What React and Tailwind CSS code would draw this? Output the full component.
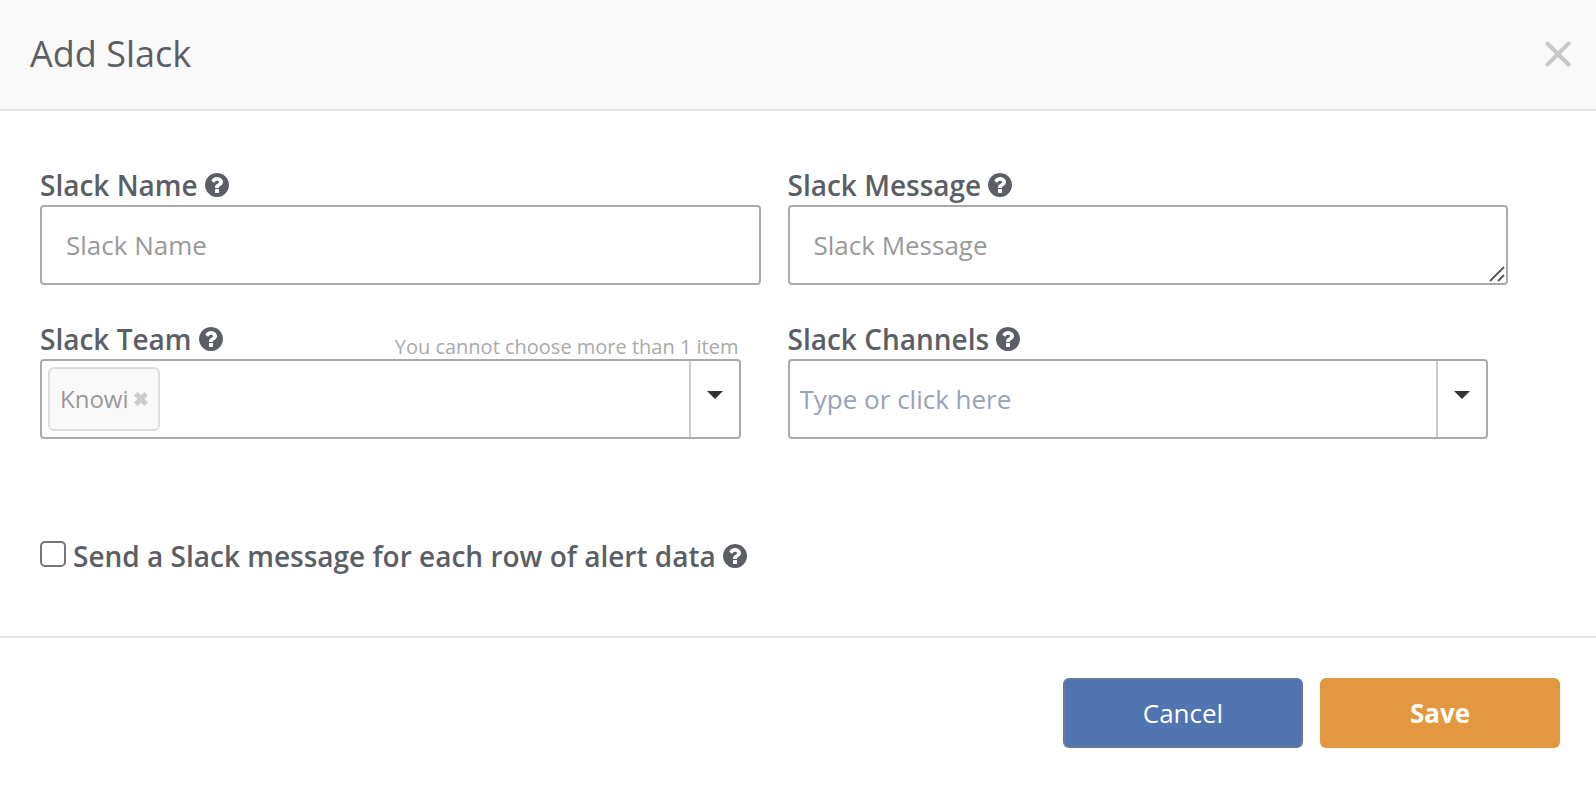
import React, { useState } from 'react';

const HelpIcon = () => (
    <svg viewBox="128 128 1536 1536" className="w-6 h-6 shrink-0" fill="currentColor" aria-hidden="true">
        <path d="M1024 1376v-192q0-14-9-23t-23-9h-192q-14 0-23 9t-9 23v192q0 14 9 23t23 9h192q14 0 23-9t9-23zm256-672q0-88-55.5-163t-138.5-116-170-41q-243 0-371 213-15 24 8 42l132 100q7 6 19 6 16 0 25-12 53-68 86-92 34-24 86-24 48 0 85.5 26t37.5 59q0 38-20 61t-68 45q-63 28-115.5 86.5t-52.5 125.5v36q0 14 9 23t23 9h192q14 0 23-9t9-23q0-19 21.5-49.5t54.5-49.5q32-18 49-28.5t46-35 44.5-48 28-60.5 12.5-81zm384 192q0 209-103 385.5t-279.5 279.5-385.5 103-385.5-103-279.5-279.5-103-385.5 103-385.5 279.5-279.5 385.5-103 385.5 103 279.5 279.5 103 385.5z" />
    </svg>
);

const FieldLabel = ({ htmlFor, children }) => (
    <label htmlFor={htmlFor} className="flex items-center gap-[7px] pb-0.5 text-[28px] leading-9 font-semibold">
        {children}
        <HelpIcon />
    </label>
);

const TagSelect = ({ id, name, tags, placeholder, onRemove }) => (
    <div className="flex h-20 mr-5 border-2 border-[#aaa] rounded bg-white">
        <div className="flex flex-1 min-w-0 items-center pl-1.5">
            {tags.map((tag) => (
                <span key={tag} className="flex h-16 items-center gap-[5px] px-2.5 border-2 border-[#dcdcdc] rounded-md bg-[#f9f9f9] text-2xl text-[#999]">
                    {tag}
                    <button type="button" aria-label={`Remove ${tag}`} onClick={() => onRemove(tag)} className="text-[#ccc]">
                        <svg viewBox="0 0 14 14" className="w-3.5 h-3.5" stroke="currentColor" strokeWidth="5" aria-hidden="true">
                            <path d="M1.8 1.8 12.2 12.2M12.2 1.8 1.8 12.2" />
                        </svg>
                    </button>
                </span>
            ))}
            <input
                id={id}
                type="text"
                placeholder={placeholder}
                className="flex-1 min-w-0 h-full pl-1 text-[26px] outline-none placeholder:text-[#98a2b8]"
            />
        </div>
        <button type="button" aria-label={`Open ${name} list`} className="flex w-[50px] justify-center border-l-2 border-[#ccc] pt-[30px]">
            <svg viewBox="0 0 16 8" className="w-4 h-2" fill="#333" aria-hidden="true">
                <path d="M0 0h16L8 8z" />
            </svg>
        </button>
    </div>
);

const App = () => {
    const [teams, setTeams] = useState(['Knowi']);
    const [perRow, setPerRow] = useState(false);

    const removeTeam = (team) => setTeams((prev) => prev.filter((t) => t !== team));

    return (
        <form className="min-h-screen bg-white text-[#5b5f65] font-['Open_Sans',sans-serif]" onSubmit={(e) => e.preventDefault()}>
            {/* Header */}
            <header className="flex items-center justify-between h-[111px] pb-0.5 pl-[30px] pr-[25px] border-b-2 border-[#e5e5e5] bg-[#f9f9f9]">
                <h1 className="text-4xl">Add Slack</h1>
                <button type="button" aria-label="Close" className="text-[#c8c8c8]">
                    <svg viewBox="0 0 26 26" className="w-[26px] h-[26px]" fill="none" stroke="currentColor" strokeWidth="4" strokeLinecap="round" aria-hidden="true">
                        <path d="M2.5 2.5 23.5 23.5M23.5 2.5 2.5 23.5" />
                    </svg>
                </button>
            </header>

            {/* Fields */}
            <main className="pt-14 pb-[60px] pl-10 pr-[88px]">
                <div className="grid grid-cols-2 gap-x-[27px] gap-y-9">
                    <div>
                        <FieldLabel htmlFor="slack-name">Slack Name</FieldLabel>
                        <input
                            id="slack-name"
                            type="text"
                            placeholder="Slack Name"
                            className="block w-full h-20 px-6 border-2 border-[#aaa] rounded text-[26px] outline-none placeholder:text-[#999]"
                        />
                    </div>
                    <div>
                        <FieldLabel htmlFor="slack-message">Slack Message</FieldLabel>
                        <div className="relative">
                            <textarea
                                id="slack-message"
                                placeholder="Slack Message"
                                className="block w-full h-20 px-6 py-5 border-2 border-[#aaa] rounded text-[26px] leading-9 resize-none outline-none placeholder:text-[#999]"
                            />
                            <svg viewBox="0 0 16 16" className="absolute right-[3px] bottom-[3px] w-4 h-4" fill="none" stroke="#555" strokeWidth="1.8" aria-hidden="true">
                                <path d="M1 15 15 1M9 15 15 9" />
                            </svg>
                        </div>
                    </div>
                    <div>
                        <div className="flex items-end justify-between mr-[22px]">
                            <FieldLabel htmlFor="slack-team">Slack Team</FieldLabel>
                            <span className="text-xl leading-6 text-[#aaa]">You cannot choose more than 1 item</span>
                        </div>
                        <TagSelect id="slack-team" name="Slack Team" tags={teams} onRemove={removeTeam} />
                    </div>
                    <div>
                        <FieldLabel htmlFor="slack-channels">Slack Channels</FieldLabel>
                        <TagSelect id="slack-channels" name="Slack Channels" tags={[]} placeholder="Type or click here" />
                    </div>
                </div>

                <div className="flex items-start gap-[7px] mt-[99px]">
                    <input
                        id="per-row"
                        type="checkbox"
                        checked={perRow}
                        onChange={(e) => setPerRow(e.target.checked)}
                        className="w-[26px] h-[26px] mt-[3px] appearance-none border-2 border-[#767676] rounded-[5px] bg-white checked:bg-[#5075b0]"
                    />
                    <FieldLabel htmlFor="per-row">Send a Slack message for each row of alert data</FieldLabel>
                </div>
            </main>

            {/* Actions */}
            <footer className="flex justify-end gap-[17px] pt-10 pr-9 pb-9 border-t-2 border-[#e5e5e5]">
                <button type="button" className="w-60 h-[70px] border-2 border-[#66799a] rounded-md bg-[#5075b0] text-[26px] text-white">
                    Cancel
                </button>
                <button type="submit" className="w-60 h-[70px] rounded-md bg-[#e3973e] text-[26px] font-bold text-white">
                    Save
                </button>
            </footer>
        </form>
    );
};

export default App;
